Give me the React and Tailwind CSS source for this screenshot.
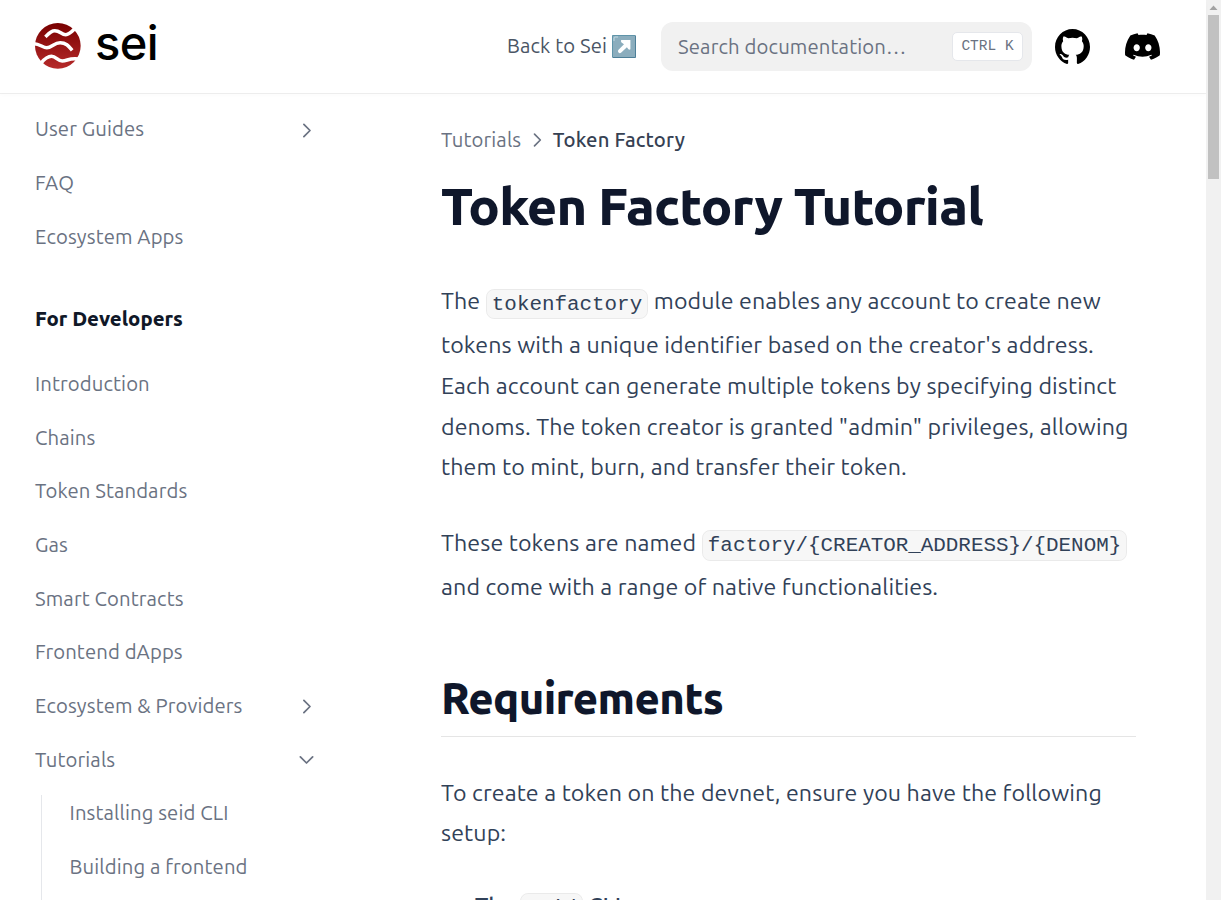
import React from "react";

const SANS = "font-['Ubuntu','Noto_Sans',sans-serif]";

function Logo() {
  return (
    <div className="flex items-center">
      <svg width="47" height="47" viewBox="41.5 39 141 141" fill="none">
        <defs>
          <linearGradient id="sei" x1="113" y1="38" x2="113" y2="176" gradientUnits="userSpaceOnUse">
            <stop stopColor="#780000" />
            <stop offset="1" stopColor="#b62a2a" />
          </linearGradient>
        </defs>
        <circle cx="113" cy="107.5" r="68.5" fill="url(#sei)" />
        <g stroke="#fff" strokeWidth="10.5">
          <path d="M76 81C84 72 91 62 104 62C120 62 123 74 137 74C147 74 153 67 162 58" />
          <path d="M40 101C58 101 68 113 80 113C94 113 102 98 120 98C138 98 146 109 156 121" />
          <path d="M62 160C72 148 81 139 94 139C108 139 112 153 126 153C142 153 146 143 176 147" />
        </g>
      </svg>
      <span className="-mt-[7px] ml-[14px] h-[56px] font-['Inter',sans-serif] text-[47px] font-medium leading-[56px] tracking-[-0.6px] text-black">sei</span>
    </div>
  );
}

function Chevron({ className }) {
  return (
    <svg className={className} viewBox="0 0 24 24" fill="none" stroke="currentColor" strokeWidth="2" strokeLinecap="round" strokeLinejoin="round">
      <path d="M9 5l7 7-7 7" />
    </svg>
  );
}

function Row({ children, arrow }) {
  return (
    <div className="flex h-[53.65px] items-center justify-between">
      <span>{children}</span>
      {arrow === "right" && <Chevron className="mr-[-0.5px] mt-[1px] h-[21px] w-[21px]" />}
      {arrow === "down" && <Chevron className="mr-[-0.7px] h-[21px] w-[21px] rotate-90" />}
    </div>
  );
}

function Code({ children }) {
  return (
    <code className="rounded-[8px] border border-black/[0.05] bg-black/[0.03] px-[5.2px] py-[2.9px] font-['Liberation_Mono',monospace] text-[20.88px] tracking-normal">
      {children}
    </code>
  );
}

function Line({ children, className = "" }) {
  return <span className={`block whitespace-nowrap ${className}`}>{children}</span>;
}

export default function App() {
  return (
    <div className={`flex h-[900px] w-[1221px] overflow-hidden bg-white tracking-[0.11px] ${SANS}`}>
      <div className="flex w-[1206px] flex-col">
        <header className="relative z-10 flex h-[93px] shrink-0 items-center bg-white pl-[34px] pr-[46px] shadow-[0_2px_4px_rgba(0,0,0,0.02),0_1px_0_rgba(0,0,0,0.06)]">
          <Logo />
          <a className="ml-auto mr-[25px] flex items-center gap-[5px] text-[20.3px] text-gray-600">
            <span>Back to Sei</span>
            <svg width="24" height="24" viewBox="0 0 24 24">
              <rect x="0.5" y="0.5" width="23" height="22" fill="#8badbd" />
              <path d="M.5 22.5H23.5V.5" stroke="#4d7f98" strokeWidth="1" fill="none" />
              <path d="M.5 22V.5H23" stroke="#5f94a9" strokeWidth="1" fill="none" />
              <path d="M2 6V3Q2 2 3 2H6" stroke="#c3dae3" strokeWidth="1" fill="none" />
              <path d="M9.3 5H18.4V14.3Q17.4 15.2 16.4 14.3L14.9 12.2L9 17.8Q7.6 18.6 6.5 17.5Q5.5 16.3 6.3 15L12 9.3L9.5 7.4Q8.3 6 9.3 5Z" fill="#fff" />
            </svg>
          </a>
          <div className="flex h-[49px] w-[371px] items-center justify-between rounded-[12px] bg-[#f1f1f1] pl-[17px] pr-[9px] text-[20.3px] text-gray-500">
            <span className="mt-[1px] tracking-[0.14px]">Search documentation…</span>
            <kbd className="flex h-[29px] w-[71px] items-center justify-center whitespace-pre rounded-[5px] border border-gray-200 bg-white font-['Liberation_Mono',monospace] text-[14.5px] tracking-normal">CTRL K</kbd>
          </div>
          <svg className="ml-[23px]" width="35" height="35" viewBox="3 3 18 18" fill="#000">
            <path d="M12 3C7.0275 3 3 7.12937 3 12.2276C3 16.3109 5.57625 19.7597 9.15374 20.9824C9.60374 21.0631 9.77249 20.7863 9.77249 20.5441C9.77249 20.3249 9.76125 19.5982 9.76125 18.8254C7.5 19.2522 6.915 18.2602 6.735 17.7412C6.63375 17.4759 6.19499 16.6569 5.8125 16.4378C5.4975 16.2647 5.0475 15.838 5.80124 15.8264C6.51 15.8149 7.01625 16.4954 7.18499 16.7723C7.99499 18.1679 9.28875 17.7758 9.80625 17.5335C9.885 16.9337 10.1212 16.53 10.38 16.2993C8.3775 16.0687 6.285 15.2728 6.285 11.7432C6.285 10.7397 6.63375 9.9092 7.20749 9.26326C7.1175 9.03257 6.8025 8.08674 7.2975 6.81794C7.2975 6.81794 8.05125 6.57571 9.77249 7.76377C10.4925 7.55615 11.2575 7.45234 12.0225 7.45234C12.7875 7.45234 13.5525 7.55615 14.2725 7.76377C15.9937 6.56418 16.7475 6.81794 16.7475 6.81794C17.2424 8.08674 16.9275 9.03257 16.8375 9.26326C17.4113 9.9092 17.76 10.7281 17.76 11.7432C17.76 15.2843 15.6563 16.0687 13.6537 16.2993C13.98 16.5877 14.2613 17.1414 14.2613 18.0065C14.2613 19.2407 14.25 20.2326 14.25 20.5441C14.25 20.7863 14.4188 21.0746 14.8688 20.9824C16.6554 20.364 18.2079 19.1866 19.3078 17.6162C20.4077 16.0457 20.9995 14.1611 21 12.2276C21 7.12937 16.9725 3 12 3Z" />
          </svg>
          <svg className="ml-[35px]" width="35" height="35" viewBox="0 1.3 30.67 30.67" fill="#000">
            <path d="M26.0015 6.9529C24.0021 6.03845 21.8787 5.37198 19.6623 5C19.3833 5.48048 19.0733 6.13144 18.8563 6.64292C16.4989 6.30193 14.1585 6.30193 11.8336 6.64292C11.6166 6.13144 11.2911 5.48048 11.0276 5C8.79575 5.37198 6.67235 6.03845 4.6869 6.9529C0.672601 12.8736 -0.41235 18.6548 0.130124 24.3585C2.79599 26.2959 5.36889 27.4739 7.89682 28.2489C8.51679 27.4119 9.07477 26.5129 9.55525 25.5675C8.64079 25.2265 7.77283 24.808 6.93587 24.312C7.15286 24.1571 7.36986 23.9866 7.57135 23.8161C12.6241 26.1255 18.0969 26.1255 23.0876 23.8161C23.3046 23.9866 23.5061 24.1571 23.7231 24.312C22.8861 24.808 22.0182 25.2265 21.1037 25.5675C21.5842 26.5129 22.1422 27.4119 22.7621 28.2489C25.2885 27.4739 27.8769 26.2959 30.5288 24.3585C31.1952 17.7559 29.4733 12.0212 26.0015 6.9529ZM10.2527 20.8402C8.73376 20.8402 7.49382 19.4608 7.49382 17.7714C7.49382 16.082 8.70276 14.7025 10.2527 14.7025C11.7871 14.7025 13.0425 16.082 13.0115 17.7714C13.0115 19.4608 11.7871 20.8402 10.2527 20.8402ZM20.4373 20.8402C18.9183 20.8402 17.6768 19.4608 17.6768 17.7714C17.6768 16.082 18.8873 14.7025 20.4373 14.7025C21.9717 14.7025 23.2271 16.082 23.1961 17.7714C23.1961 19.4608 21.9872 20.8402 20.4373 20.8402Z" />
          </svg>
        </header>

        <div className="flex h-[807px]">
          <nav className="w-[441px] shrink-0 overflow-hidden pl-[35px] pr-[125px] pt-[9.8px] text-[20.3px] text-gray-500">
            <Row arrow="right">User Guides</Row>
            <Row>FAQ</Row>
            <Row>Ecosystem Apps</Row>
            <div className="flex h-[93.9px] items-center pt-[17px] font-extrabold tracking-[0px] text-gray-900">
              <span>For Developers</span>
            </div>
            <Row>Introduction</Row>
            <Row>Chains</Row>
            <Row>Token Standards</Row>
            <Row>Gas</Row>
            <Row>Smart Contracts</Row>
            <Row>Frontend dApps</Row>
            <Row arrow="right">Ecosystem &amp; Providers</Row>
            <Row arrow="down">Tutorials</Row>
            <div className="flex h-[150px]">
              <div className="ml-[6px] mr-[27.6px] mt-[8px] w-px bg-gray-200" />
              <div>
                <Row>Installing seid CLI</Row>
                <Row>Building a frontend</Row>
              </div>
            </div>
          </nav>

          <main className="h-[807px] w-[695px] shrink-0 overflow-hidden text-[23.2px] text-slate-700">
            <div className="mt-[32px] flex h-[30px] items-center text-[20.3px] text-gray-500">
              <span>Tutorials</span>
              <Chevron className="mx-[6px] h-[20px] w-[20px]" />
              <span className="-ml-[0.4px] font-medium tracking-[0.16px] text-gray-700">Token Factory</span>
            </div>
            <h1 className="mt-[22px] h-[58px] whitespace-nowrap text-[52.2px] font-extrabold leading-[58px] tracking-[-0.8px] text-slate-900">Token Factory Tutorial</h1>
            <p className="mt-[45.45px] leading-[40.6px]">
              <Line className="h-[44px] tracking-[0.1px]">The <Code>tokenfactory</Code> module enables any account to create new</Line>
              <Line>tokens with a unique identifier based on the creator's address.</Line>
              <Line>Each account can generate multiple tokens by specifying distinct</Line>
              <Line>denoms. The token creator is granted "admin" privileges, allowing</Line>
              <Line>them to mint, burn, and transfer their token.</Line>
            </p>
            <p className="mt-[35.15px] leading-[40.6px]">
              <Line className="h-[44px]">These tokens are named <Code>factory/&#123;CREATOR_ADDRESS&#125;/&#123;DENOM&#125;</Code></Line>
              <Line>and come with a range of native functionalities.</Line>
            </p>
            <h2 className="mt-[64px] h-[66px] whitespace-nowrap border-b border-neutral-200 text-[43.5px] font-extrabold leading-[54px] tracking-[-0.65px] text-slate-900">Requirements</h2>
            <p className="mt-[35.2px] leading-[40.4px]">
              <Line>To create a token on the devnet, ensure you have the following</Line>
              <Line>setup:</Line>
            </p>
            <ul className="mt-[32px] pl-[34px] leading-[40.6px]">
              <li>
                <Line className="font-medium tracking-[0px]">The <Code>seid</Code> CLI</Line>
              </li>
            </ul>
          </main>
        </div>
      </div>
      <div className="flex w-[15px] flex-col items-center bg-[#f1f1f1]">
        <svg width="15" height="15" viewBox="0 0 15 15"><path d="M3.5 10L7.5 5.5L11.5 10Z" fill="#a3a3a3" /></svg>
        <div className="h-[164px] w-[11px] bg-[#c1c1c1]" />
      </div>
    </div>
  );
}
